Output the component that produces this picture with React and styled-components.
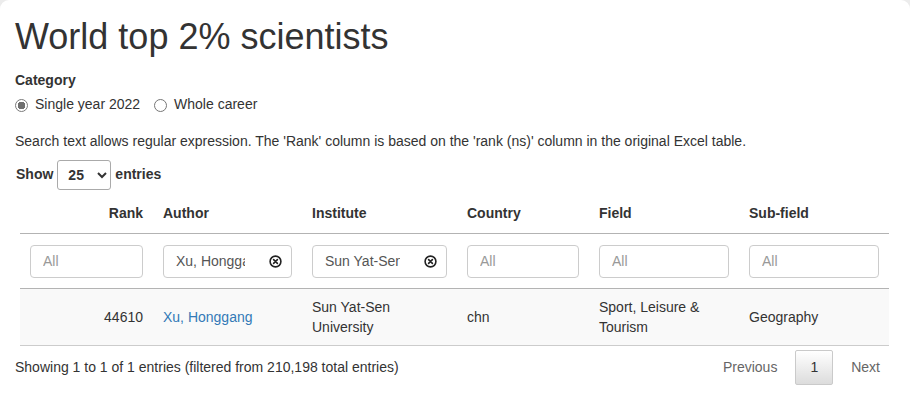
import styled, { createGlobalStyle } from "styled-components";

const GlobalStyle = createGlobalStyle`
  html, body {
    margin: 0;
    padding: 0;
    background: #ececec;
  }
  body {
    font-family: "Liberation Sans", Arial, sans-serif;
    font-size: 14px;
    line-height: 1.42857;
    color: #333;
  }
  * { box-sizing: border-box; }
`;

const columns = [
  { key: "rank", label: "Rank", width: 133, align: "right" },
  { key: "author", label: "Author", width: 149 },
  { key: "institute", label: "Institute", width: 155 },
  { key: "country", label: "Country", width: 132 },
  { key: "field", label: "Field", width: 150 },
  { key: "subfield", label: "Sub-field", width: 150 },
];

const filters = {
  rank: "",
  author: "Xu, Honggang",
  institute: "Sun Yat-Sen",
  country: "",
  field: "",
  subfield: "",
};

const row = {
  rank: "44610",
  author: "Xu, Honggang",
  institute: "Sun Yat-Sen University",
  country: "chn",
  field: "Sport, Leisure & Tourism",
  subfield: "Geography",
};

function ClearIcon() {
  return (
    <svg width="13" height="13" viewBox="0 0 13 13">
      <circle cx="6.5" cy="6.5" r="5.4" fill="none" stroke="#222" strokeWidth="1.6" />
      <path d="M4.6 4.6 L8.4 8.4 M8.4 4.6 L4.6 8.4" stroke="#222" strokeWidth="1.6" strokeLinecap="round" />
    </svg>
  );
}

export default function App() {
  return (
    <>
      <GlobalStyle />
      <Card>
        <Title>World top 2% scientists</Title>
        <Label>Category</Label>
        <RadioGroup>
          <RadioItem>
            <Radio $checked />
            Single year 2022
          </RadioItem>
          <RadioItem>
            <Radio />
            Whole career
          </RadioItem>
        </RadioGroup>
        <Note>
          Search text allows regular expression. The 'Rank' column is based on the 'rank (ns)' column in the original Excel table.
        </Note>
        <LengthRow>
          Show
          <Select defaultValue="25">
            <option>10</option>
            <option>25</option>
            <option>50</option>
            <option>100</option>
          </Select>
          entries
        </LengthRow>
        <TableWrap>
          <Table>
            <colgroup>
              {columns.map((c) => (
                <col key={c.key} style={{ width: c.width }} />
              ))}
            </colgroup>
            <thead>
              <HeadRow>
                {columns.map((c) => (
                  <Th key={c.key} $align={c.align}>
                    {c.label}
                  </Th>
                ))}
              </HeadRow>
              <FilterRow>
                {columns.map((c) => (
                  <FilterCell key={c.key}>
                    <FilterBox>
                      <FilterInput
                        placeholder="All"
                        defaultValue={filters[c.key]}
                        $clearable={!!filters[c.key]}
                        readOnly
                      />
                      {filters[c.key] && (
                        <ClearBtn>
                          <ClearIcon />
                        </ClearBtn>
                      )}
                    </FilterBox>
                  </FilterCell>
                ))}
              </FilterRow>
            </thead>
            <tbody>
              <BodyRow>
                <Td $align="right">{row.rank}</Td>
                <Td>
                  <Link href="#">{row.author}</Link>
                </Td>
                <Td>{row.institute}</Td>
                <Td>{row.country}</Td>
                <Td>{row.field}</Td>
                <Td>{row.subfield}</Td>
              </BodyRow>
            </tbody>
          </Table>
        </TableWrap>
        <Footer>
          <Info>Showing 1 to 1 of 1 entries (filtered from 210,198 total entries)</Info>
          <Pager>
            <PageBtn>Previous</PageBtn>
            <PageBtn $current>1</PageBtn>
            <PageBtn>Next</PageBtn>
          </Pager>
        </Footer>
      </Card>
    </>
  );
}

/* ========================= styled ========================= */

const Card = styled.div`
  background: #fff;
  border-radius: 9px 9px 0 0;
  padding: 17px 15px 20px;
  min-height: 405px;
`;

const Title = styled.h1`
  margin: 0 0 14px;
  font-size: 36px;
  font-weight: 500;
  line-height: 1.1;
  color: #333;
`;

const Label = styled.div`
  font-weight: 700;
  margin-bottom: 4px;
`;

const RadioGroup = styled.div`
  display: flex;
  gap: 14px;
`;

const RadioItem = styled.label`
  display: flex;
  align-items: center;
  gap: 7px;
`;

const Radio = styled.span`
  width: 13px;
  height: 13px;
  margin-top: 1px;
  border-radius: 50%;
  border: 1px solid ${({ $checked }) => ($checked ? "#7a7a7a" : "#767676")};
  background: ${({ $checked }) =>
    $checked ? "radial-gradient(circle, #6f6f6f 0 3.6px, #fff 4px)" : "#fff"};
`;

const Note = styled.p`
  margin: 17px 0 0;
`;

const LengthRow = styled.div`
  margin-top: 8px;
  display: flex;
  align-items: center;
  gap: 4px;
  font-weight: 700;
  padding-left: 1px;
`;

const Select = styled.select`
  height: 30px;
  width: 54px;
  padding: 0 2px 0 6px;
  font: inherit;
  font-weight: 700;
  color: #333;
  border: 1px solid #aaa;
  border-radius: 3px;
  background: #fff;
`;

const TableWrap = styled.div`
  padding: 0 6px 0 5px;
  margin-top: 5px;
`;

const Table = styled.table`
  width: 100%;
  table-layout: fixed;
  border-collapse: collapse;
`;

const HeadRow = styled.tr`
  border-bottom: 1px solid #b3b3b3;
`;

const Th = styled.th`
  text-align: ${({ $align }) => $align || "left"};
  font-weight: 700;
  padding: 8px 10px 10px;
  line-height: 20px;
`;

const FilterRow = styled.tr`
  border-bottom: 1px solid #b3b3b3;
`;

const FilterCell = styled.td`
  padding: 11px 10px 10px;
`;

const FilterBox = styled.div`
  position: relative;
`;

const FilterInput = styled.input`
  display: block;
  width: 100%;
  height: 33px;
  padding: 6px ${({ $clearable }) => ($clearable ? "46px" : "12px")} 6px 12px;
  font: inherit;
  color: #555;
  border: 1px solid #ccc;
  border-radius: 4px;
  background: #fff;
  outline: none;

  &::placeholder {
    color: #999;
  }
`;

const ClearBtn = styled.span`
  position: absolute;
  right: 10px;
  top: 10px;
  display: flex;
`;

const BodyRow = styled.tr`
  background: #f9f9f9;
  border-bottom: 1px solid #ccc;
`;

const Td = styled.td`
  padding: 8px 10px;
  line-height: 20px;
  text-align: ${({ $align }) => $align || "left"};
  vertical-align: middle;
`;

const Link = styled.a`
  color: #337ab7;
  text-decoration: none;
`;

const Footer = styled.div`
  display: flex;
  justify-content: space-between;
  align-items: center;
  margin-top: 4px;
`;

const Info = styled.div`
  padding-top: 2px;
`;

const Pager = styled.div`
  display: flex;
  align-items: center;
  gap: 3px;
`;

const PageBtn = styled.span`
  padding: 8px 14px;
  line-height: 17px;
  color: ${({ $current }) => ($current ? "#333" : "#666")};
  border: 1px solid ${({ $current }) => ($current ? "#cacaca" : "transparent")};
  border-radius: 2px;
  background: ${({ $current }) =>
    $current ? "linear-gradient(to bottom, #fff 0%, #dcdcdc 100%)" : "transparent"};
`;
